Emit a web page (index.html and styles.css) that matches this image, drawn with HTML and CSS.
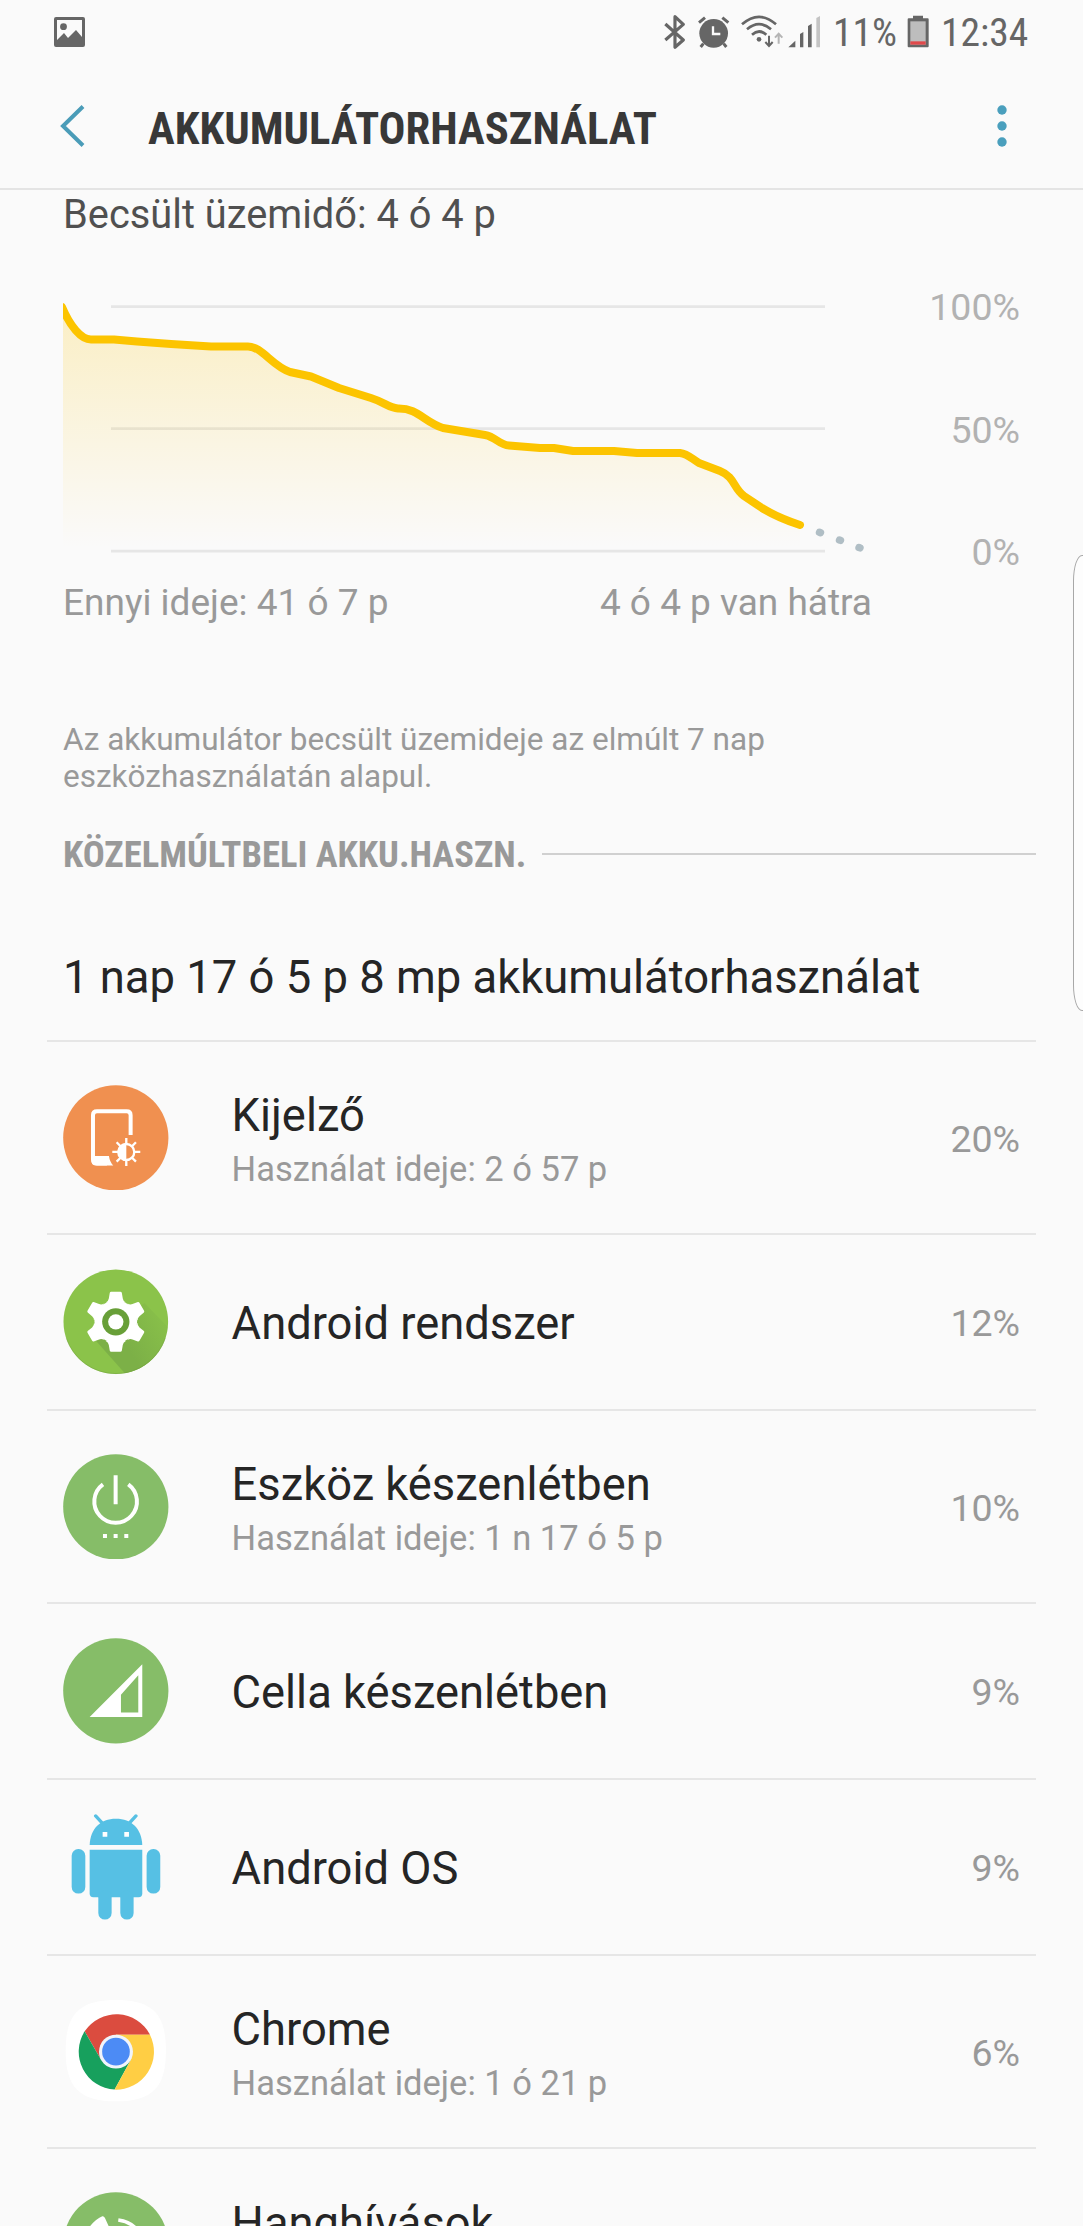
FILE: index.html
```html
<!DOCTYPE html>
<html lang="hu">
<head>
  <meta charset="UTF-8" />
  <meta name="viewport" content="width=device-width, initial-scale=1.0"/>
  <title>Akkumulátorhasználat</title>
  <link rel="stylesheet" href="styles.css">
</head>
<body>

  <div class="status-bar">
    <svg class="icon-image" viewBox="0 0 31 30" width="31" height="30">
      <path fill="#666" fill-rule="evenodd" d="M2 0h27a2 2 0 0 1 2 2v26a2 2 0 0 1-2 2H2a2 2 0 0 1-2-2V2a2 2 0 0 1 2-2zM3 3v20l7-7 4 5 8-8 6 7V3z"/>
      <circle cx="9.5" cy="9.7" r="3.4" fill="#666"/>
    </svg>
    <div class="status-right">
      <svg class="bt" viewBox="70 44 64 105" width="21.3" height="35">
        <path d="M74 71l54 48-25 22V49l25 23-54 47" fill="none" stroke="#666" stroke-width="9.5" stroke-linejoin="round"/>
      </svg>
      <svg class="alarm" viewBox="172 44 96 105" width="32" height="35">
        <circle cx="219" cy="99" r="43" fill="#666"/>
        <path d="M175 67l18-15M263 67l-18-15M188 130l-8 10M249 130l8 10" stroke="#666" stroke-width="9"/>
        <path d="M217 78v23h22" fill="none" stroke="#fafafa" stroke-width="7"/>
      </svg>
      <svg class="wifi" viewBox="302 44 128 105" width="42.7" height="35">
        <path d="M305 72q51-45 102 0M320 87q36-31 72 0M335 103q21-19 43 0" fill="none" stroke="#666" stroke-width="8"/>
        <circle cx="356" cy="117" r="7" fill="#666"/>
        <path d="M386 106v30M375 125l11 12 11-12" fill="none" stroke="#666" stroke-width="6"/>
        <path d="M415 130v-29M404 112l11-12 11 12" fill="none" stroke="#b5b5b5" stroke-width="6"/>
      </svg>
      <svg class="signal" viewBox="444 44 98 105" width="32.7" height="35">
        <path d="M445 141l21-20v20zM480 101l10-6v46h-10zM504 77l11-7v71h-11z" fill="#666"/>
        <path d="M529 53l11-6v94h-11z" fill="#c4c4c4"/>
      </svg>
      <span class="level"><span class="cond">11%</span></span>
      <svg class="battery" viewBox="802 44 66 105" width="22" height="35">
        <path d="M820 46h30v8h14a3 3 0 0 1 3 3v81a3 3 0 0 1-3 3h-57a3 3 0 0 1-3-3V57a3 3 0 0 1 3-3h13z" fill="#666"/>
        <path d="M812 63h46v70h-46z" fill="#bdbdbd"/>
        <path d="M812 123h46v10h-46z" fill="#e0494b"/>
      </svg>
      <span class="clock"><span class="cond">12:34</span></span>
    </div>
  </div>

  <header class="app-bar">
    <svg class="back" viewBox="0 0 25 42" width="25" height="42">
      <path d="M23 1.500L3 21l20 19.500" fill="none" stroke="#4a9cb8" stroke-width="4"/>
    </svg>
    <h1><span class="cond">AKKUMULÁTORHASZNÁLAT</span></h1>
    <svg class="menu" viewBox="0 0 10 42" width="10" height="42">
      <g fill="#4a9fbd">
        <circle cx="5" cy="5" r="4.700"/>
        <circle cx="5" cy="21" r="4.700"/>
        <circle cx="5" cy="37" r="4.700"/>
      </g>
    </svg>
  </header>

  <section class="estimate">
    <p class="remaining">Becsült üzemidő: 4 ó 4 p</p>
    <div class="chart-row">
      <svg class="chart" viewBox="63 296 810 262" width="810" height="262">
        <defs>
          <linearGradient id="fill" gradientUnits="userSpaceOnUse" x1="0" y1="303" x2="0" y2="548">
            <stop offset="0" stop-color="#fcc400" stop-opacity="0.22"/>
            <stop offset="1" stop-color="#fcc400" stop-opacity="0"/>
          </linearGradient>
        </defs>
        <path d="M111 306.700H825M111 428.700H825M111 551.200H825" stroke="#e6e6e6" stroke-width="2.800"/>
        <path fill="url(#fill)" d="M63 309C70 326 81 339.500 91 339.500H114L137 341.500 171 344 211 346.500H248C262 346.500 272 366 290 372L311 376.500 339 388 371 398C384 402 389 408 398 408.500 418 408 424 422 443 428L485 435C496 437 499 445 509 445.500L540 448H554L573 451H614L637 453H680C688 454 692 459 699 463L720 471C735 477 733 488 744 496L762 508C775 516 788 521 800 525V551H63z"/>
        <path fill="none" stroke="#fcc400" stroke-width="8" stroke-linecap="round" stroke-linejoin="round" d="M62 307C70 326 81 339.500 91 339.500H114L137 341.500 171 344 211 346.500H248C262 346.500 272 366 290 372L311 376.500 339 388 371 398C384 402 389 408 398 408.500 418 408 424 422 443 428L485 435C496 437 499 445 509 445.500L540 448H554L573 451H614L637 453H680C688 454 692 459 699 463L720 471C735 477 733 488 744 496L762 508C775 516 788 521 800 525"/>
        <path d="M819.500 532.300l1 .4M839.500 540l1 .4M859 547.500l1 .4" stroke="#b0bec5" stroke-width="7.400" stroke-linecap="round"/>
      </svg>
      <div class="scale">
        <span>100%</span>
        <span>50%</span>
        <span>0%</span>
      </div>
    </div>
    <div class="chart-labels">
      <span>Ennyi ideje: 41 ó 7 p</span>
      <span>4 ó 4 p van hátra</span>
    </div>
    <p class="note">Az akkumulátor becsült üzemideje az elmúlt 7 nap<br>eszközhasználatán alapul.</p>
  </section>

  <h2><span class="cond">KÖZELMÚLTBELI AKKU.HASZN.</span></h2>
  <p class="total">1 nap 17 ó 5 p 8 mp akkumulátorhasználat</p>

  <ul class="usage">
    <li class="item two-line">
      <svg class="app-icon" viewBox="0 0 317 317">
        <circle cx="158.500" cy="158.500" r="158" fill="#f09050"/>
        <path d="M203 150V91q0-12-12-12H102q-12 0-12 12V224q0 12 12 12h30" fill="none" stroke="#fff" stroke-width="12"/>
        <path d="M88 213h50q2 17 13 29H100q-14 0-14-14z" fill="#fff"/>
        <circle cx="190" cy="201" r="24" fill="none" stroke="#fff" stroke-width="7"/>
        <path d="M190 175a26 26 0 0 0 0 52z" fill="#fff"/>
        <path d="M190 159v18M190 225v18M148 201h18M214 201h18M161 172l11 11M208 219l11 11M161 230l11-11M208 183l11-11" stroke="#fff" stroke-width="7"/>
      </svg>
      <div class="info">
        <span class="name">Kijelző</span>
        <span class="time">Használat ideje: 2 ó 57 p</span>
      </div>
      <span class="percent">20%</span>
    </li>

    <li class="item">
      <svg class="app-icon" viewBox="0 0 317 317">
        <defs>
          <clipPath id="round"><circle cx="158.500" cy="158.500" r="157"/></clipPath>
          <linearGradient id="shadow" gradientUnits="userSpaceOnUse" x1="190" y1="230" x2="300" y2="165">
            <stop offset="0" stop-color="#7cb047"/>
            <stop offset="1" stop-color="#7cb047" stop-opacity="0.25"/>
          </linearGradient>
          <path id="tooth" d="M-30-58q8-4 9-12l3-17q1-3 4-3h28q3 0 4 3l3 17q1 8 9 12z"/>
        </defs>
        <circle cx="158.500" cy="158.500" r="157" fill="#8bc34a"/>
        <path clip-path="url(#round)" d="M92 208l98 110h130V180l-75-78z" fill="url(#shadow)"/>
        <path d="M10 208a157 157 0 0 0 297 0" fill="none" stroke="#6d9a3c" stroke-width="2" opacity=".6"/>
        <g transform="translate(158.500 158.500)" fill="#fff">
          <circle r="64"/>
          <use href="#tooth"/>
          <use href="#tooth" transform="rotate(60)"/>
          <use href="#tooth" transform="rotate(120)"/>
          <use href="#tooth" transform="rotate(180)"/>
          <use href="#tooth" transform="rotate(240)"/>
          <use href="#tooth" transform="rotate(300)"/>
          <circle r="41" fill="#689f38"/>
          <circle r="23"/>
        </g>
      </svg>
      <div class="info">
        <span class="name">Android rendszer</span>
      </div>
      <span class="percent">12%</span>
    </li>

    <li class="item two-line">
      <svg class="app-icon" viewBox="0 0 317 317">
        <circle cx="158.500" cy="158.500" r="158" fill="#86bd68"/>
        <path d="M120 91a64 64 0 1 0 76 0M158 64v87" fill="none" stroke="#fff" stroke-width="12"/>
        <path d="M120 240h12v12h-12zM152 240h12v12h-12zM184 240h12v12h-12z" fill="#fff"/>
      </svg>
      <div class="info">
        <span class="name">Eszköz készenlétben</span>
        <span class="time">Használat ideje: 1 n 17 ó 5 p</span>
      </div>
      <span class="percent">10%</span>
    </li>

    <li class="item">
      <svg class="app-icon" viewBox="0 0 317 317">
        <circle cx="158.500" cy="158.500" r="158" fill="#86bd68"/>
        <path d="M80 237L238 79v158zM174 170v54h52V112z" fill="#fff" fill-rule="evenodd"/>
      </svg>
      <div class="info">
        <span class="name">Cella készenlétben</span>
      </div>
      <span class="percent">9%</span>
    </li>

    <li class="item">
      <svg class="app-icon" viewBox="0 0 317 317">
        <g fill="#56c0e4">
          <path d="M80 93C82 44 112 14 159 14s77 30 79 79z"/>
          <path d="M98 6l22 24M219 6l-22 24" stroke="#56c0e4" stroke-width="10" stroke-linecap="round"/>
          <path d="M80 107h158v132q0 11-11 11H91q-11 0-11-11z"/>
          <rect x="26" y="105" width="41" height="134" rx="20"/>
          <rect x="251" y="105" width="41" height="134" rx="20"/>
          <rect x="106" y="230" width="40" height="87" rx="20"/>
          <rect x="172" y="230" width="40" height="87" rx="20"/>
        </g>
        <path d="M119 54h14v14h-14zM184 54h14v14h-14z" fill="#fff"/>
      </svg>
      <div class="info">
        <span class="name">Android OS</span>
      </div>
      <span class="percent">9%</span>
    </li>

    <li class="item two-line">
      <svg class="app-icon" viewBox="0 0 317 317">
        <path d="M159 3c110 0 150 42 150 152S269 307 159 307 8 265 8 155 49 3 159 3z" fill="#fff"/>
        <path d="M65 97A114 114 0 0 1 261 107L159 107 115 184z" fill="#db4c3f"/>
        <path d="M65 97A114 114 0 0 0 155 272L203 184 159 158 115 184z" fill="#17a05d"/>
        <path d="M261 107A114 114 0 0 1 155 272L203 184 159 107z" fill="#ffce44"/>
        <circle cx="159" cy="158" r="51" fill="#f1f4fa"/>
        <circle cx="159" cy="158" r="41.500" fill="#4c8bf5"/>
      </svg>
      <div class="info">
        <span class="name">Chrome</span>
        <span class="time">Használat ideje: 1 ó 21 p</span>
      </div>
      <span class="percent">6%</span>
    </li>

    <li class="item two-line last">
      <svg class="app-icon" viewBox="0 0 317 317">
        <circle cx="158.500" cy="158.500" r="158" fill="#86bd68"/>
        <path d="M80 104q20-24 38-31 5-1 8 5l18 40-22 20q14 34 44 54l22-20 38 22q4 3 2 8-8 22-32 34Q96 214 80 104z" fill="#fff"/>
        <path d="M166 84q64 8 72 76M166 114q34 6 42 46" fill="none" stroke="#fff" stroke-width="11"/>
      </svg>
      <div class="info">
        <span class="name">Hanghívások</span>
      </div>
    </li>
  </ul>

  <div class="edge-handle"></div>

</body>
</html>
```
FILE: styles.css
```css
* {
  box-sizing: border-box;
}

body {
  position: relative;
  width: 1083px;
  height: 2226px;
  margin: 0;
  overflow: hidden;
  background: #fafafa;
  color: #252525;
  font-family: Roboto, "Liberation Sans", sans-serif;
}

h1, h2, p, ul {
  margin: 0;
  padding: 0;
  font-weight: normal;
}

svg {
  display: block;
  flex: none;
}

.cond {
  display: inline-block;
  font-family: "Roboto Condensed", Roboto, sans-serif;
  font-stretch: 75%;
}

.status-bar {
  display: flex;
  justify-content: space-between;
  height: 60px;
  padding: 15px 58px 0 54px;
  color: #666;
  font-size: 39.5px;
  line-height: 35px;
}

.icon-image {
  margin-top: 2px;
}

.status-right {
  display: flex;
}

.alarm {
  margin-left: 12.7px;
}

.wifi {
  margin-left: 11.3px;
}

.signal {
  margin-left: 4.7px;
}

.level {
  width: 66px;
  margin-left: 12px;
}

.battery {
  margin-left: 8px;
}

.clock {
  width: 84px;
  margin-left: 12px;
}

.app-bar {
  display: flex;
  align-items: center;
  height: 130px;
  padding: 4px 76px 0 60px;
  border-bottom: 2px solid #e4e4e4;
}

h1 {
  flex: 1;
  padding: 5px 0 0 63px;
  color: #383838;
  font-size: 44.7px;
  font-weight: bold;
  line-height: 54px;
  white-space: nowrap;
}

.estimate {
  padding: 0 63px;
}

.remaining {
  padding-top: 1px;
  color: #505050;
  font-size: 39.8px;
  line-height: 48px;
}

.chart-row {
  display: flex;
  justify-content: space-between;
  margin-top: 57px;
}

.scale {
  display: flex;
  flex-direction: column;
  justify-content: space-between;
  height: 289px;
  margin-top: -11px;
  color: #b2b2b2;
  font-size: 37.5px;
  line-height: 44px;
  text-align: right;
}

.chart-labels {
  display: flex;
  justify-content: space-between;
  width: 809px;
  margin-top: 7px;
  color: #999;
  font-size: 37px;
  line-height: 44px;
}

.note {
  margin-top: 96px;
  color: #999;
  font-size: 31.5px;
  line-height: 37px;
}

h2 {
  display: flex;
  align-items: center;
  margin: 38px 47px 0 63px;
  color: #999;
  font-size: 36.6px;
  font-weight: bold;
  line-height: 44px;
}

h2::after {
  content: "";
  flex: 1;
  height: 2px;
  margin: -3px 0 0 16px;
  background: #d0d0d0;
}

.total {
  margin-top: 74px;
  padding-left: 63px;
  font-size: 45.4px;
  line-height: 54px;
}

.usage {
  margin: 35px 47px 0;
  list-style: none;
}

.item {
  display: flex;
  align-items: center;
  height: 176px;
  padding: 0 16px;
  border-top: 2px solid #e6e6e6;
}

.two-line {
  height: 193px;
}

.app-icon {
  width: 105.6px;
  height: 105.6px;
}

.info {
  display: flex;
  flex: 1;
  flex-direction: column;
  padding: 4px 0 0 63px;
}

.name {
  font-size: 45.3px;
  line-height: 54px;
}

.time {
  margin-top: 5px;
  color: #999;
  font-size: 34.5px;
  line-height: 42px;
}

.last .info {
  align-self: flex-start;
  padding-top: 48px;
}

.percent {
  padding-top: 2px;
  color: #999;
  font-size: 37.5px;
}

.edge-handle {
  position: absolute;
  top: 555px;
  right: -12px;
  width: 22px;
  height: 456px;
  border: 1px solid #a8a8a8;
  border-radius: 9px / 26px;
  background: #fdfdfd;
}
```
